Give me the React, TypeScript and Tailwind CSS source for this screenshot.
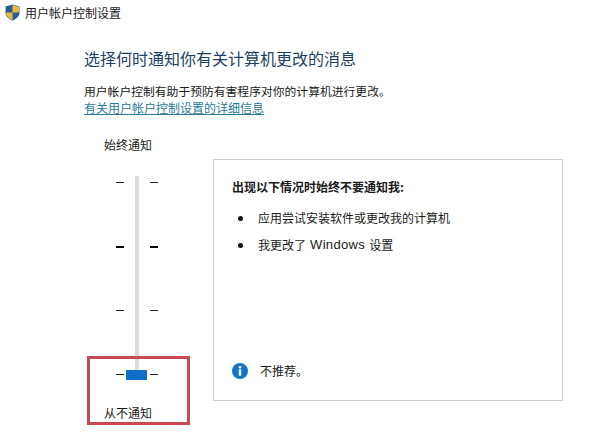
export default function App() {
  const Tick = ({ bold }: { bold?: boolean }) => (
    <div className="flex h-[2px] w-[42px] justify-between">
      <div className={`w-[8px] ${bold ? "h-[2px] bg-black" : "h-px bg-[#222222]"}`} />
      <div className={`w-[8px] ${bold ? "h-[2px] bg-black" : "h-px bg-[#222222]"}`} />
    </div>
  );
  return (
    <div
      className="relative flex h-[446px] w-[598px] flex-col overflow-hidden bg-white text-[12px] text-[#1a1a1a]"
      style={{ fontFamily: '"Noto Sans CJK SC", "Liberation Sans", sans-serif' }}
    >
      <div className="flex h-[25px] items-center gap-[5px] pl-[5px]">
        <svg width="15" height="17" viewBox="0 0 15 17">
          <path d="M7.5 0.5 L14.5 2.5 V8.5 C14.5 12.5 11 15 7.5 16.5 C4 15 0.5 12.5 0.5 8.5 V2.5 Z" fill="#2a5a94" />
          <path d="M7.5 1 L14 2.9 V8.5 H7.5 Z" fill="#e8b93c" />
          <path d="M7.5 8.5 H1 C1 12 4 14.6 7.5 16 Z" fill="#e8b93c" />
        </svg>
        <span className="text-[12px] leading-none">用户帐户控制设置</span>
      </div>

      <div className="flex flex-col pl-[84px]">
        <h1 className="mt-[22px] text-[16px] leading-[22px] font-normal text-[#1c3f63]">
          选择何时通知你有关计算机更改的消息
        </h1>
        <p className="mt-[14px] text-[11.8px] leading-[16px]">
          用户帐户控制有助于预防有害程序对你的计算机进行更改。
        </p>
        <a className="mt-px text-[12px] leading-[16px] text-[#2a7a9a] underline">
          有关用户帐户控制设置的详细信息
        </a>

        <div className="mt-[21px] flex items-start">
          <div className="flex w-[129px] flex-col items-start pl-[20px]">
            <div className="leading-[16px]">始终通知</div>
            <div className="relative mt-[29px] ml-[12px] flex h-[194px] w-[42px] flex-col justify-between">
              <div className="absolute top-[-6px] bottom-[4px] left-[19px] w-[4px] bg-[#dcdcdc]" />
              <div className="absolute bottom-[-4px] left-[10px] h-[10px] w-[21px] bg-[#0f6fc6]" />
              <Tick />
              <Tick bold />
              <Tick />
              <Tick />
            </div>
            <div className="mt-[29px] leading-[16px]">从不通知</div>
          </div>

          <div className="mt-[22px] flex h-[242px] w-[350px] flex-col border border-[#cfcfcf] pt-[18px] pr-[16px] pb-[20px] pl-[18px]">
            <div className="leading-[18px] font-bold">出现以下情况时始终不要通知我:</div>
            <div className="mt-[13px] flex h-[18px] items-center">
              <div className="ml-[6px] h-[5px] w-[5px] rounded-full bg-[#111111]" />
              <span className="ml-[15px]">应用尝试安装软件或更改我的计算机</span>
            </div>
            <div className="mt-[9px] flex h-[18px] items-center">
              <div className="ml-[6px] h-[5px] w-[5px] rounded-full bg-[#111111]" />
              <span className="ml-[15px] flex items-center">
                我更改了
                <span className="mr-[4px] ml-[4px] text-[13px] tracking-[0.35px]" style={{ fontFamily: '"Liberation Sans", sans-serif' }}>Windows</span>
                设置
              </span>
            </div>
            <div className="mt-auto flex items-center">
              <svg width="16" height="16" viewBox="0 0 16 16">
                <circle cx="8" cy="8" r="8" fill="#1673c5" />
                <circle cx="8" cy="4.2" r="1.3" fill="#ffffff" />
                <rect x="6.8" y="6.4" width="2.4" height="6.2" fill="#ffffff" />
              </svg>
              <span className="ml-[12px]">不推荐。</span>
            </div>
          </div>
        </div>
      </div>

      <div className="absolute top-[356px] left-[87px] h-[69px] w-[103px] border-[3px] border-[#c8494f]" />
    </div>
  );
}
